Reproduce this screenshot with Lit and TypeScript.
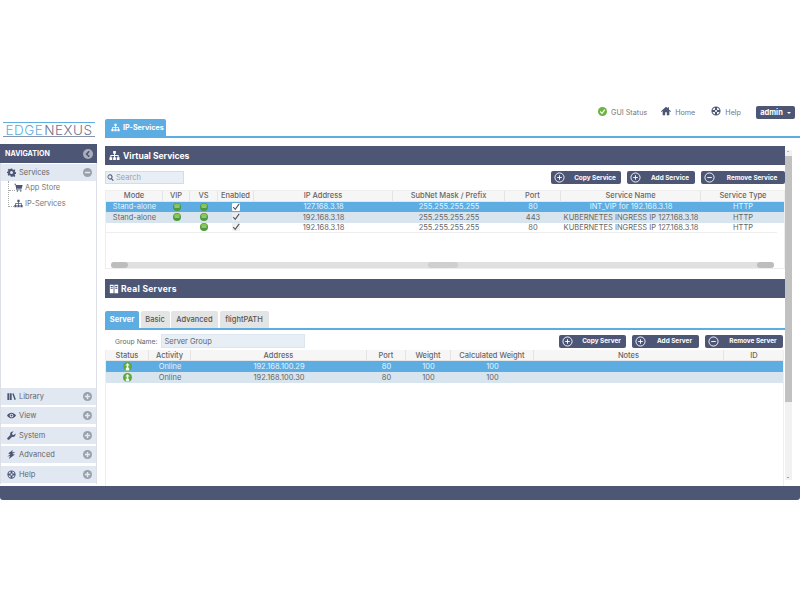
import { LitElement, html, css, svg } from "lit";
import { customElement } from "lit/decorators.js";

const i = (body: unknown, size = 10, color = "currentColor", vb = "0 0 24 24") =>
  html`<svg class="ic" width=${size} height=${size} viewBox=${vb} fill=${color}>${body}</svg>`;

const sitemap = svg`<path d="M9 2h6v6h-2v3h8v5h2v6h-6v-6h2v-3h-6v3h2v6H9v-6h2v-3H5v3h2v6H1v-6h2v-5h8V8H9z"/>`;
const gear = svg`<path fill-rule="evenodd" d="M10 1h4l.7 3.2 2 .8L19.500 3.300l2.800 2.800-1.700 2.800.8 2 3 .7v4l-3 .7-.8 2 1.700 2.800-2.800 2.800-2.800-1.700-2 .8L14 23h-4l-.7-3-2-.8-2.800 1.700-2.800-2.800 1.700-2.800-.8-2L0 14v-4l3-.7.8-2L2.100 4.500l2.800-2.800L7.700 3.400l2-.8zM12 8a4 4 0 1 0 0 8 4 4 0 0 0 0-8z"/>`;
const cart = svg`<path d="M1 2h4l.8 3H23l-2.500 10H8l.4 2H20v2H6.800L3.500 4H1z"/><circle cx="9" cy="21.500" r="2"/><circle cx="18" cy="21.500" r="2"/>`;
const books = svg`<path d="M1 3h5v18H1zM7.500 3h5v18h-5zM14 4.500l3.700-1.400 6 16.800-3.700 1.400z"/>`;
const eye = svg`<path fill-rule="evenodd" d="M0 12c3-5 7.500-7.500 12-7.500S21 7 24 12c-3 5-7.500 7.500-12 7.500S3 17 0 12zm12-5a5 5 0 1 0 0 10 5 5 0 0 0 0-10zm0 2.500a2.500 2.500 0 1 1 0 5 2.500 2.500 0 0 1 0-5z"/>`;
const wrench = svg`<path d="M22.500 6.500l-4.300 4.200-3.800-1-1-3.800L17.600 1.600a7 7 0 0 0-8.900 8.900L1.500 17.700a3.400 3.400 0 0 0 4.800 4.800l7.200-7.200a7 7 0 0 0 9-8.800z"/>`;
const bolt = svg`<path d="M15 0L3 9l6 2-8 6 7-1-3 8 16-12-7-1.500 8-5.500-8 1z"/>`;
const buoy = svg`<path fill-rule="evenodd" d="M12 1a11 11 0 1 1 0 22 11 11 0 0 1 0-22zM9.500 3.600v4.900a4.500 4.500 0 0 0-1 1H3.600a9 9 0 0 1 5.900-5.900zm5 0a9 9 0 0 1 5.900 5.900h-4.900a4.500 4.500 0 0 0-1-1zM3.600 14.500h4.900a4.500 4.500 0 0 0 1 1v4.900a9 9 0 0 1-5.900-5.900zm11.900 0h4.900a9 9 0 0 1-5.900 5.900v-4.900a4.500 4.500 0 0 0 1-1zM12 9.500a2.500 2.500 0 1 1 0 5 2.500 2.500 0 0 1 0-5z"/>`;
const home = svg`<path d="M12 2L0 12.500l1.500 1.700L4 12v10h6v-7h4v7h6V12l2.500 2.200 1.500-1.700-5-4.400V3h-3v2.500z"/>`;
const search = svg`<path fill-rule="evenodd" d="M10 1a9 9 0 0 1 7.200 14.400l6 6-2.800 2.800-6-6A9 9 0 1 1 10 1zm0 3.500a5.500 5.500 0 1 0 0 11 5.500 5.500 0 0 0 0-11z"/>`;
const servers = svg`<path fill-rule="evenodd" d="M2 2h9v20H2zm11 0h9v20h-9zM4 4.500V7h5V4.500zm11 0V7h5V4.500zM4 9v2.500h5V9zm11 0v2.500h5V9z"/>`;

const circleBtn = (minus: boolean, size: number, bg: string, fg: string) =>
  html`<svg class="ic" width=${size} height=${size} viewBox="0 0 12 12">
    <circle cx="6" cy="6" r="6" fill=${bg} />
    <path d=${minus ? "M2.500 5h7v2h-7z" : "M5 2.500h2V5h2.500v2H7v2.500H5V7H2.500V5H5z"} fill=${fg} />
  </svg>`;

const backBtn = () =>
  html`<svg class="ic" width="10" height="10" viewBox="0 0 12 12">
    <circle cx="6" cy="6" r="6" fill="#a9aeb9" />
    <path d="M7.500 2.800L4.300 6l3.200 3.200" fill="none" stroke="#4e5676" stroke-width="1.800" />
  </svg>`;

const btnIcon = (kind: string) =>
  html`<svg class="ic" width="11" height="11" viewBox="0 0 12 12" fill="none" stroke="#fff" stroke-width="1">
    <circle cx="6" cy="6" r="5" />
    <path d=${kind === "minus" ? "M3.500 6h5" : "M6 3.500v5M3.500 6h5"} />
  </svg>`;

const led = () =>
  html`<svg class="ic" width="8" height="8" viewBox="0 0 8 8">
    <circle cx="4" cy="4" r="4" fill="#4d9a3c" />
    <path d="M.6 3C1.500 1 2.700.4 4 .4S6.500 1 7.400 3z" fill="#8cc63f" />
    <rect x="1.500" y="3.400" width="5" height="1.200" fill="#d8eccb" opacity=".8" />
  </svg>`;

const serverLed = () =>
  html`<svg class="ic" width="9" height="9" viewBox="0 0 8 8">
    <circle cx="4" cy="4" r="4" fill="#5da83f" />
    <path d="M4 .8L6 3H2zM3.300 3h1.400v2H3.300zM2.500 5.200h3V7.500h-3z" fill="#f2f7ee" />
  </svg>`;

const check = () =>
  html`<span class="check"><svg width="8" height="8" viewBox="0 0 10 10" fill="none" stroke="#555" stroke-width="1.400"><path d="M1.500 5l2.500 3L9 1" /></svg></span>`;

const vsRows = [
  { m: "Stand-alone", vip: true, ip: "127.168.3.18", mask: "255.255.255.255", port: "80", name: "INT_VIP for 192.168.3.18" },
  { m: "Stand-alone", vip: true, ip: "192.168.3.18", mask: "255.255.255.255", port: "443", name: "KUBERNETES INGRESS IP 127.168.3.18" },
  { m: "", vip: false, ip: "192.168.3.18", mask: "255.255.255.255", port: "80", name: "KUBERNETES INGRESS IP 127.168.3.18" },
];
const rsRows = [
  { a: "192.168.100.29", w: "100", c: "100" },
  { a: "192.168.100.30", w: "100", c: "100" },
];

@customElement("app-root")
export class AppRoot extends LitElement {
  static styles = css`
    :host { display: block; width: 800px; height: 600px; background: #fff; overflow: hidden;
      font-family: Inter, "Open Sans", sans-serif; font-size: 7.500px; color: #666; }
    * { box-sizing: border-box; }
    .ic { display: block; flex: none; }
    .app { padding-top: 100px; height: 500px; display: flex; flex-direction: column; }

    .top { height: 21px; display: flex; justify-content: flex-end; align-items: center; padding: 4px 5px 0 0; }
    .top .link { display: flex; align-items: center; color: #777; font-size: 7.200px; }
    .top .link .ic { margin: -3px 4px 0 0; color: #4e5676; }
    .l1 { margin-right: 14px; } .l2 { margin-right: 16px; } .l3 { margin-right: 15px; }
    .admin { width: 39px; height: 13px; background: #4e5676; color: #fff; border-radius: 2px; font-weight: 700;
      font-size: 7.500px; display: flex; align-items: center; justify-content: center; gap: 4px; }
    .caret { width: 0; height: 0; border: 2.500px solid transparent; border-top-color: #fff; border-bottom: 0; }

    .tabline { height: 19px; display: flex; margin-top: -2px; }
    .logo { width: 105px; padding: 3px 0 0 3px; flex: none; }
    .logo .mark { width: 92px; height: 15px; border-top: 1px solid #5dade2; border-bottom: 1px solid #8a94a8;
      display: flex; justify-content: center; align-items: center; font-size: 13.500px; font-weight: 300;
      font-family: Inter, sans-serif; letter-spacing: .5px; white-space: nowrap; }
    .logo .a { color: #5dade2; } .logo .b { color: #6a7390; margin-left: 1px; }
    .tabwrap { flex: 1; border-bottom: 2px solid #5dade2; }
    .mtab { width: 61px; height: 17px; background: #5dade2; color: #fff; font-weight: 700; font-size: 7.200px; white-space: nowrap;
      display: flex; align-items: center; gap: 3px; padding-left: 6px; border-radius: 2px 2px 0 0; }

    .body { flex: 1; display: flex; min-height: 0; padding-top: 6px; }
    .nav { width: 97px; flex: none; border-right: 1px solid #dcdfe6; border-left: 1px solid #dcdfe6; display: flex; flex-direction: column; height: 340px; margin-right: 8px; }
    .navhead { height: 19px; background: #4e5676; color: #fff; font-weight: 700; font-size: 7.100px; display: flex; margin-bottom: 1px;
      align-items: center; justify-content: space-between; padding: 0 4px 0 5px; margin-left: -1px; margin-right: -1px; }
    .acc { height: 17px; background: #e1e8f2; display: flex; align-items: center; padding: 0 4px 0 6px; color: #666; font-size: 7.500px; gap: 3px; }
    .acc .ic:first-child { color: #4e5676; }
    .acc span { flex: 1; }
    .tree { flex: 1; position: relative; margin-top: -1px; }
    .lines { position: absolute; left: 7px; top: 1px; width: 6px; height: 26px; border-left: 1px dotted #aaa; border-bottom: 1px dotted #aaa; }
    .lines::before { content: ""; position: absolute; left: 0; top: 9px; width: 6px; border-top: 1px dotted #aaa; }
    .leaf { display: flex; align-items: center; gap: 2px; color: #777; font-size: 7.500px; padding-left: 13px; }
    .leaf .ic { color: #4e5676; }
    .l-a { height: 14px; } .l-b { height: 14px; margin-top: 2px; }
    .bottom { display: flex; flex-direction: column; gap: 2.400px; padding-bottom: 1.500px; }

    .main { flex: 1; min-width: 0; display: flex; }
    .col { width: 680px; flex: none; padding-top: 2px; display: flex; flex-direction: column; }
    .bar { height: 19px; background: #4e5676; color: #fff; display: flex; align-items: center; gap: 3px; padding-left: 4px;
      font-size: 8.500px; font-weight: 700; }
    .bar.wide { letter-spacing: .3px; gap: 2px; }
    .toolbar { height: 13px; margin-top: 6px; display: flex; justify-content: space-between; }
    .search { width: 79px; height: 13px; background: #e8eef6; border: 1px solid #d3dde9; display: flex; align-items: center; gap: 2px;
      padding-left: 1px; color: #9aa0aa; font-size: 7.500px; }
    .search .ic { color: #4e5676; }
    .btns { display: flex; gap: 6px; }
    .btn { height: 13px; background: #4e5676; color: #fff; font-weight: 700; font-size: 6.400px; border-radius: 2px;
      display: flex; align-items: center; padding-left: 3px; white-space: nowrap; }
    .btn b { flex: 1; text-align: center; padding-left: 4px; font-weight: 700; }
    .w1 { width: 70px; } .w2 { width: 68px; } .w3 { width: 84px; }

    .table { border: 1px solid #eee; margin-top: 6px; }
    .vs { height: 79px; position: relative; }
    .row { display: grid; height: 10.500px; align-items: center; text-align: center; white-space: nowrap; }
    .vs .row { grid-template-columns: 57px 27px 28px 36px 139px 112px 56px 140px 84px; }
    .rs .row { grid-template-columns: 43px 42px 176px 39px 45px 83px 190px 60px; }
    .row > * { display: flex; justify-content: center; align-items: center; height: 100%; }
    .head { background: #f6f6f6; font-weight: 500; color: #666; font-size: 7.500px; border-bottom: 1px solid #e6e6e6; }
    .head > * { border-right: 1px solid #e4e4e4; }
    .head > *:last-child { border-right: 0; }
    .rs .head { height: 11px; }
    .sel { background: #5dade2; color: #e8f4fc; }
    .alt { background: #d9e5ee; }
    .plain { border-bottom: 1px solid #eee; margin-right: 7px; }
    .rs-row { height: 10.800px; }
    .check { width: 8px; height: 8px; background: #f0f0f0; border-radius: 1px; display: flex; align-items: center; justify-content: center; }
    .sel .check { background: #fff; }
    .alt .check { background: #e9eef2; }
    .hscroll { position: absolute; left: 5px; right: 10px; top: 71px; height: 6px; background: #e0e0e0; border-radius: 3px; display: flex; justify-content: space-between; }
    .hscroll i { display: block; width: 17px; height: 6px; background: #bdbdbd; border-radius: 3px; }
    .hscroll .grip { width: 30px; background: #cfcfcf; }

    .spacer { height: 10px; }
    .tabs2 { display: flex; gap: 1.500px; margin-top: 13px; border-bottom: 2px solid #5dade2; height: 19px; }
    .t2 { height: 17px; background: #e4e4e4; color: #555; font-size: 7.500px; font-weight: 500; display: flex; align-items: center; justify-content: center; border-radius: 2px 2px 0 0; }
    .t2.on { background: #5dade2; color: #fff; font-weight: 700; }
    .t1w { width: 34px; } .t2w { width: 29px; } .t3w { width: 47px; } .t4w { width: 49px; }
    .group { height: 14px; margin-top: 4px; display: flex; align-items: center; padding-left: 10px; gap: 3px; font-size: 6.800px; color: #666; }
    .group .in { width: 144px; height: 14px; background: #e8eef6; border: 1px solid #dde5ef; font-size: 7.500px; display: flex; align-items: center; padding-left: 3px; color: #666; }
    .group .btns { margin-left: auto; margin-right: 2px; }
    .rs { border: 0; margin-top: 2px; border-left: 1px solid #eee; border-right: 1px solid #eee; flex: 1; margin-right: 1px; }
    .b1 { width: 67px; } .b2 { width: 67px; } .b3 { width: 78px; }

    .vscroll { width: 7px; height: 330px; margin-top: 6px; background: #f1f1f1; position: relative; flex: none; }
    .vscroll .thumb { margin-top: 6px; height: 246px; background: #c1c1c1; }
    .vscroll .up, .vscroll .down { position: absolute; left: 2px; width: 0; height: 0; border: 1.500px solid transparent; }
    .vscroll .up { top: 1px; border-bottom-color: #777; border-top: 0; }
    .vscroll .down { bottom: 2px; border-top-color: #555; border-bottom: 0; }

    .foot { height: 14px; background: #4e5676; border-radius: 0 0 3px 3px; flex: none; }
  `;

  private vsHead = ["Mode", "VIP", "VS", "Enabled", "IP Address", "SubNet Mask / Prefix", "Port", "Service Name", "Service Type"];
  private rsHead = ["Status", "Activity", "Address", "Port", "Weight", "Calculated Weight", "Notes", "ID"];

  render() {
    return html`<div class="app">
      <div class="top">
        <div class="link l1">${html`<svg class="ic" width="9" height="9" viewBox="0 0 10 10"><circle cx="5" cy="5" r="5" fill="#6cb33f"/><path d="M2.500 5l2 2 3-4" fill="none" stroke="#fff" stroke-width="1.300"/></svg>`}GUI Status</div>
        <div class="link l2">${i(home)}Home</div>
        <div class="link l3">${i(buoy)}Help</div>
        <div class="admin">admin <span class="caret"></span></div>
      </div>
      <div class="tabline">
        <div class="logo"><div class="mark"><span class="a">EDGE</span><span class="b">NEXUS</span></div></div>
        <div class="tabwrap"><div class="mtab">${i(sitemap, 9)}IP-Services</div></div>
      </div>
      <div class="body">
        <nav class="nav">
          <div class="navhead">NAVIGATION ${backBtn()}</div>
          <div class="acc">${i(gear, 9)}<span>Services</span>${circleBtn(true, 9, "#9aa0aa", "#e1e8f2")}</div>
          <div class="tree">
            <div class="lines"></div>
            <div class="leaf l-a">${i(cart, 9)}App Store</div>
            <div class="leaf l-b">${i(sitemap, 9)}IP-Services</div>
          </div>
          <div class="bottom">
            <div class="acc">${i(books, 9)}<span>Library</span>${circleBtn(false, 9, "#9aa0aa", "#e1e8f2")}</div>
            <div class="acc">${i(eye, 9)}<span>View</span>${circleBtn(false, 9, "#9aa0aa", "#e1e8f2")}</div>
            <div class="acc">${i(wrench, 9)}<span>System</span>${circleBtn(false, 9, "#9aa0aa", "#e1e8f2")}</div>
            <div class="acc">${i(bolt, 9)}<span>Advanced</span>${circleBtn(false, 9, "#9aa0aa", "#e1e8f2")}</div>
            <div class="acc">${i(buoy, 9)}<span>Help</span>${circleBtn(false, 9, "#9aa0aa", "#e1e8f2")}</div>
          </div>
        </nav>
        <div class="main">
          <div class="col">
            <div class="bar">${i(sitemap, 11)}Virtual Services</div>
            <div class="toolbar">
              <div class="search">${i(search, 7)}Search</div>
              <div class="btns">
                <div class="btn w1">${btnIcon("copy")}<b>Copy Service</b></div>
                <div class="btn w2">${btnIcon("add")}<b>Add Service</b></div>
                <div class="btn w3">${btnIcon("minus")}<b>Remove Service</b></div>
              </div>
            </div>
            <div class="table vs">
              <div class="row head">${this.vsHead.map((h) => html`<div>${h}</div>`)}</div>
              ${vsRows.map(
                (r, n) => html`<div class="row ${n === 0 ? "sel" : n === 1 ? "alt" : "plain"}">
                  <div>${r.m}</div><div>${r.vip ? led() : ""}</div><div>${led()}</div><div>${check()}</div>
                  <div>${r.ip}</div><div>${r.mask}</div><div>${r.port}</div><div>${r.name}</div><div>HTTP</div>
                </div>`
              )}
              <div class="hscroll"><i></i><i class="grip"></i><i></i></div>
            </div>
            <div class="spacer"></div>
            <div class="bar wide">${i(servers, 10)}Real Servers</div>
            <div class="tabs2">
              <div class="t2 on t1w">Server</div><div class="t2 t2w">Basic</div><div class="t2 t3w">Advanced</div><div class="t2 t4w">flightPATH</div>
            </div>
            <div class="group">Group Name: <div class="in">Server Group</div>
              <div class="btns">
                <div class="btn b1">${btnIcon("copy")}<b>Copy Server</b></div>
                <div class="btn b2">${btnIcon("add")}<b>Add Server</b></div>
                <div class="btn b3">${btnIcon("minus")}<b>Remove Server</b></div>
              </div>
            </div>
            <div class="table rs">
              <div class="row head">${this.rsHead.map((h) => html`<div>${h}</div>`)}</div>
              ${rsRows.map(
                (r, n) => html`<div class="row rs-row ${n === 0 ? "sel" : "alt"}">
                  <div>${serverLed()}</div><div>Online</div><div>${r.a}</div><div>80</div><div>${r.w}</div><div>${r.c}</div><div></div><div></div>
                </div>`
              )}
            </div>
          </div>
          <div class="vscroll"><span class="up"></span><div class="thumb"></div><span class="down"></span></div>
        </div>
      </div>
      <div class="foot"></div>
    </div>`;
  }
}
